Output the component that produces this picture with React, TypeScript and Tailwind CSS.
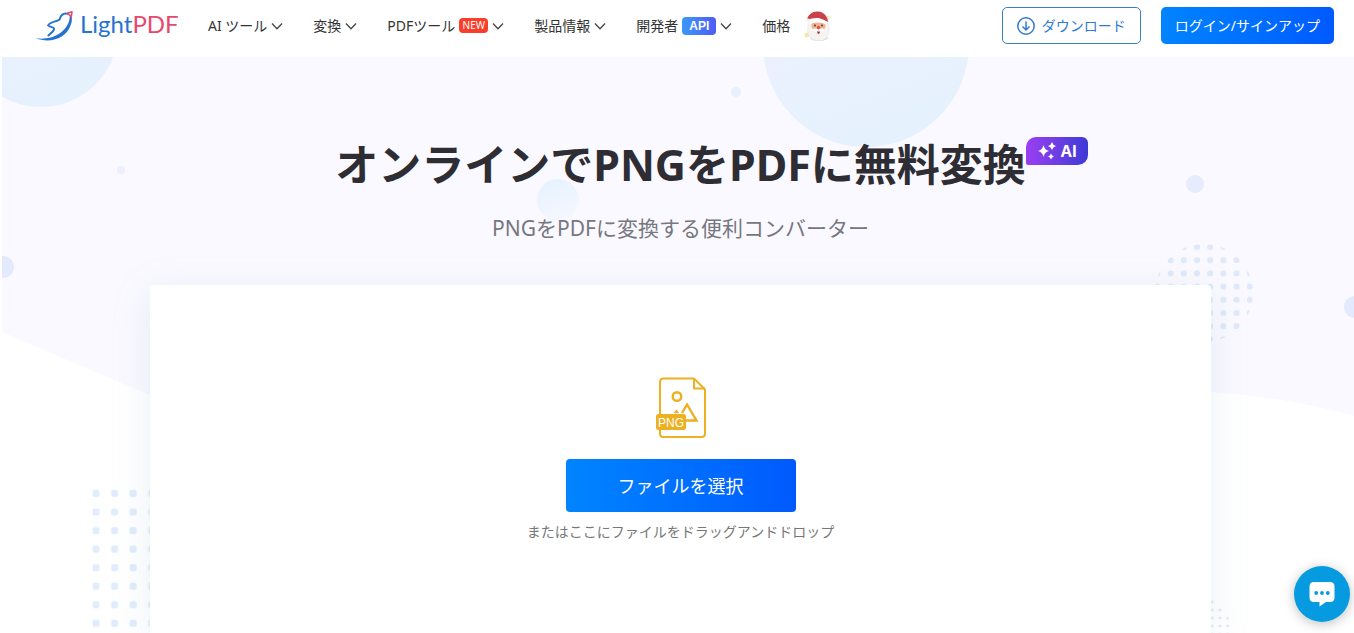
import React from "react";

const navItems = [
  { label: "AI ツール", badge: "" },
  { label: "変換", badge: "" },
  { label: "PDFツール", badge: "new" },
  { label: "製品情報", badge: "" },
  { label: "開発者", badge: "api" },
];

const Chevron = () => (
  <svg viewBox="0 0 12 12" className="w-3 h-3" fill="none" stroke="#444" strokeWidth="1.3">
    <path d="M1 3.5 6 8.7 11 3.5" />
  </svg>
);

const Bird = () => (
  <svg viewBox="0 0 38 32" className="w-[38px] h-8" fill="none">
    <path
      d="M32 3.800C28 3 24.800 5 23.800 9C22.500 11.800 14.500 11 12 15.400C14.500 17.800 18.800 16.800 18 19.400C17.300 21.700 14.500 23.700 12.300 25.400"
      stroke="#2673cf"
      strokeWidth="1.900"
      strokeLinecap="round"
      strokeLinejoin="round"
    />
    <path
      d="M35.600 6C37 12.500 33.500 21 26.500 26C19 31 9 31.800 0 28.300C8 29.300 17 28.200 23.500 23.500C30 18.800 34 12.500 33.600 6.500Z"
      fill="#2673cf"
    />
    <path d="M31.500 3.200 36 1.800 35.300 6.800Z" stroke="#e9476c" strokeWidth="1.500" strokeLinejoin="round" />
  </svg>
);

const Santa = () => (
  <svg viewBox="0 0 28 32" className="w-7 h-8">
    <circle cx="3" cy="25" r="2.400" fill="#f5e6b3" />
    <circle cx="24.500" cy="7.500" r="2" fill="#f7edc9" />
    <ellipse cx="15" cy="28" rx="9" ry="3" fill="#dedede" />
    <path d="M5 12C3 17 3 25 7 28C11 31.500 19 31.500 22 28C26 24 26 17 23 12Z" fill="#f6f4f2" stroke="#e6e2df" strokeWidth=".6" />
    <path d="M7.500 12.500H21.500V17C21 19.500 18 20.500 14.500 20.500S8 19.500 7.500 17Z" fill="#efb491" />
    <path d="M3 10C4 4 9 1 14 1.500C20 2 23.500 6 24 12L20 10C15 7 9 7.500 3 10Z" fill="#c9404a" />
    <path d="M4.500 12C9 8.500 18 8 23.500 12.500L22.500 15C17 11.500 11 11.500 6 14.500Z" fill="#fff" />
    <circle cx="4" cy="10.500" r="2" fill="#f8f3ec" />
    <circle cx="11" cy="15.500" r="1" fill="#5c3a31" />
    <circle cx="18" cy="15.500" r="1" fill="#5c3a31" />
    <circle cx="14.500" cy="17.500" r="1.700" fill="#d9534a" />
    <path d="M8 20C11 17.500 13 19 14.500 19.800C16 19 18 17.500 21 20C19 22 16 21.500 14.500 20.800C13 21.500 10 22 8 20Z" fill="#fff" />
    <path d="M13 21.500H16Q15.500 24 14.500 24T13 21.500Z" fill="#a83238" />
  </svg>
);

const Backdrop = () => (
  <div className="absolute inset-y-0 left-0.5 right-0" aria-hidden="true">
    <svg viewBox="0 0 1352 576" preserveAspectRatio="xMidYMin slice" className="w-full h-full">
      <defs>
        <linearGradient id="bubble" x1="0" y1="0" x2="0.4" y2="1">
          <stop offset="0" stopColor="#f0f1fe" />
          <stop offset="1" stopColor="#e6f1fe" />
        </linearGradient>
        <linearGradient id="ball" x1="0.3" y1="0" x2="0.7" y2="1">
          <stop offset="0" stopColor="#e6f2fe" />
          <stop offset="1" stopColor="#f6f7ff" />
        </linearGradient>
        <pattern id="dots" x="1162" y="183.400" width="13.200" height="13.200" patternUnits="userSpaceOnUse">
          <circle cx="6.600" cy="6.600" r="3" fill="#dfe9f9" />
        </pattern>
        <pattern id="squares" x="85" y="427.300" width="18.550" height="18.550" patternUnits="userSpaceOnUse">
          <rect x="5.500" y="5.700" width="7" height="7" rx="2" fill="#e1edfc" />
        </pattern>
        <pattern id="specks" x="1206.200" y="541" width="7.800" height="8" patternUnits="userSpaceOnUse">
          <circle cx="3.900" cy="4" r="1.600" fill="#e2eaf6" />
        </pattern>
      </defs>
      <path d="M0 0H1352V359C1305 346 1255 338 1209 335C900 320 620 480 148 338Q72 306 0 275Z" fill="#faf9ff" />
      <circle cx="39" cy="-27" r="77" fill="url(#bubble)" />
      <circle cx="864" cy="-13" r="103" fill="url(#bubble)" />
      <circle cx="556" cy="143" r="21" fill="url(#ball)" />
      <circle cx="734" cy="35" r="5" fill="#e8effd" />
      <circle cx="119" cy="113" r="4" fill="#eceffd" />
      <circle cx="1193" cy="127" r="9" fill="#e5ecfd" />
      <circle cx="1" cy="210" r="11" fill="#e3eafd" />
      <circle cx="1353" cy="250" r="11" fill="#e3eafd" />
      <circle cx="1202" cy="236" r="49" fill="url(#dots)" />
      <rect x="85" y="427" width="100" height="149" fill="url(#squares)" />
      <circle cx="1193" cy="576" r="37" fill="url(#specks)" />
    </svg>
  </div>
);

const PngIcon = () => (
  <svg viewBox="0 0 50 62" className="w-[50px] h-[62px]" fill="none" stroke="#edb021" strokeWidth="2">
    <path d="M4 37V5Q4 1.500 7.500 1.500H38L49 12.500V56.500Q49 60 45.500 60H7.500Q4 60 4 56.500V53" />
    <path d="M38 1.500V11.500H49" strokeLinejoin="round" />
    <circle cx="21" cy="19.500" r="4.300" strokeWidth="2.400" />
    <path d="M26 36 31 27.500 40.500 43.500H30" strokeWidth="2.400" />
    <path d="M17.500 36 20.500 32.500 23 36Z" fill="#edb021" stroke="none" />
    <rect x="0" y="37" width="30" height="16" rx="2.500" fill="#edb021" stroke="none" />
    <text x="15" y="49.500" textAnchor="middle" fontSize="12" fontFamily="Liberation Sans, sans-serif" fill="#fff" stroke="none">
      PNG
    </text>
  </svg>
);

const App = () => {
  return (
    <div className="min-h-screen flex flex-col bg-white text-[#333] font-['Noto_Sans','Noto_Sans_CJK_JP',sans-serif]">
      <header className="h-[57px] flex items-center justify-between pl-9 pr-5 pb-1.5 text-sm whitespace-nowrap">
        <div className="flex items-center">
          <a href="#" className="flex items-center gap-1.5 mr-[30px]">
            <Bird />
            <span className="w-[98px] pb-1 text-2xl leading-7 text-[#2673cf] font-['Lato',sans-serif]">
              Light<span className="text-[#e9476c]">PDF</span>
            </span>
          </a>
          <nav className="flex items-center gap-[30px]">
            {navItems.map((item) => (
              <button key={item.label} className="flex items-center gap-1">
                {item.label}
                {item.badge === "new" && (
                  <span className="w-[29px] h-[15px] rounded bg-[#fa3e2c] text-white text-[10px] leading-[15px]">
                    NEW
                  </span>
                )}
                {item.badge === "api" && (
                  <span className="w-[34px] h-[18px] rounded bg-linear-to-r from-[#3a97f8] to-[#4d5cf5] text-white text-xs leading-[18px] font-bold font-['Liberation_Sans',sans-serif]">
                    API
                  </span>
                )}
                <Chevron />
              </button>
            ))}
            <a href="#" className="flex items-center gap-3.5">
              価格
              <Santa />
            </a>
          </nav>
        </div>
        <div className="flex items-center gap-5">
          <button className="h-[37px] flex items-center gap-[7px] px-3.5 rounded-[5px] border border-[#3c80c4] text-[#2f7bd0]">
            <svg viewBox="0 0 18 18" className="w-[18px] h-[18px]" fill="none" stroke="currentColor" strokeWidth="1.5">
              <circle cx="9" cy="9" r="8.200" />
              <path d="M9 4.500V13M5.500 9.500 9 13 12.500 9.500" />
            </svg>
            ダウンロード
          </button>
          <button className="h-[37px] px-3.5 rounded-[5px] bg-linear-to-r from-[#0084ff] to-[#0059ff] text-white">
            ログイン/サインアップ
          </button>
        </div>
      </header>

      <main className="relative flex-1 flex flex-col items-center pt-20 pl-[7px] overflow-hidden">
        <Backdrop />
        <div className="relative">
          <h1 className="text-[43px] leading-[56px] font-bold text-[#2d2d33]">オンラインでPNGをPDFに無料変換</h1>
          <span className="absolute left-full top-0 w-[62px] h-7 flex items-center justify-center gap-1 rounded-tl-[10px] rounded-tr-md rounded-br-[10px] rounded-bl-xs bg-linear-to-r from-[#9b3df2] to-[#3b39d6] text-white font-bold font-['Open_Sans',sans-serif]">
            <svg viewBox="0 0 20 20" className="w-5 h-5" fill="currentColor">
              <path d="M6.500 4Q7.500 9 12 10Q7.500 11 6.500 16Q5.500 11 1 10Q5.500 9 6.500 4Z" />
              <path d="M15 1Q15.800 4.200 19 5Q15.800 5.800 15 9Q14.200 5.800 11 5Q14.200 4.200 15 1Z" />
              <path d="M14 12.500Q14.700 14.800 17 15.500Q14.700 16.200 14 18.500Q13.300 16.200 11 15.500Q13.300 14.800 14 12.500Z" />
            </svg>
            AI
          </span>
        </div>
        <p className="relative mt-5 text-[21px] leading-[30px] text-[#77777f]">PNGをPDFに変換する便利コンバーター</p>

        <section className="relative mt-[42px] w-full max-w-[1061px] flex-1 flex flex-col items-center pt-[92px] pb-20 rounded-t bg-white shadow-[0_8px_40px_rgba(120,160,195,0.15)]">
          <PngIcon />
          <button className="mt-5 w-[230px] h-[53px] rounded bg-linear-to-r from-[#0084ff] to-[#0059ff] text-white text-lg">
            ファイルを選択
          </button>
          <p className="mt-2 text-sm leading-6 text-[#777]">またはここにファイルをドラッグアンドドロップ</p>
        </section>
      </main>

      <button
        aria-label="チャット"
        className="fixed right-1 bottom-[11px] w-14 h-14 flex items-center justify-center rounded-full bg-[#069be0] shadow-[0_2px_12px_rgba(0,0,0,0.25)]"
      >
        <svg viewBox="0 0 26 26" className="w-[26px] h-[26px]">
          <path d="M5 1H21Q25.500 1 25.500 5.500V16.500Q25.500 21 21 21H17L10.500 25.500V21H5Q.500 21 .500 16.500V5.500Q.500 1 5 1Z" fill="#fff" />
          <circle cx="7.200" cy="12" r="1.900" fill="#069be0" />
          <circle cx="13" cy="12" r="1.900" fill="#069be0" />
          <circle cx="18.800" cy="12" r="1.900" fill="#069be0" />
        </svg>
      </button>
    </div>
  );
};

export default App;
